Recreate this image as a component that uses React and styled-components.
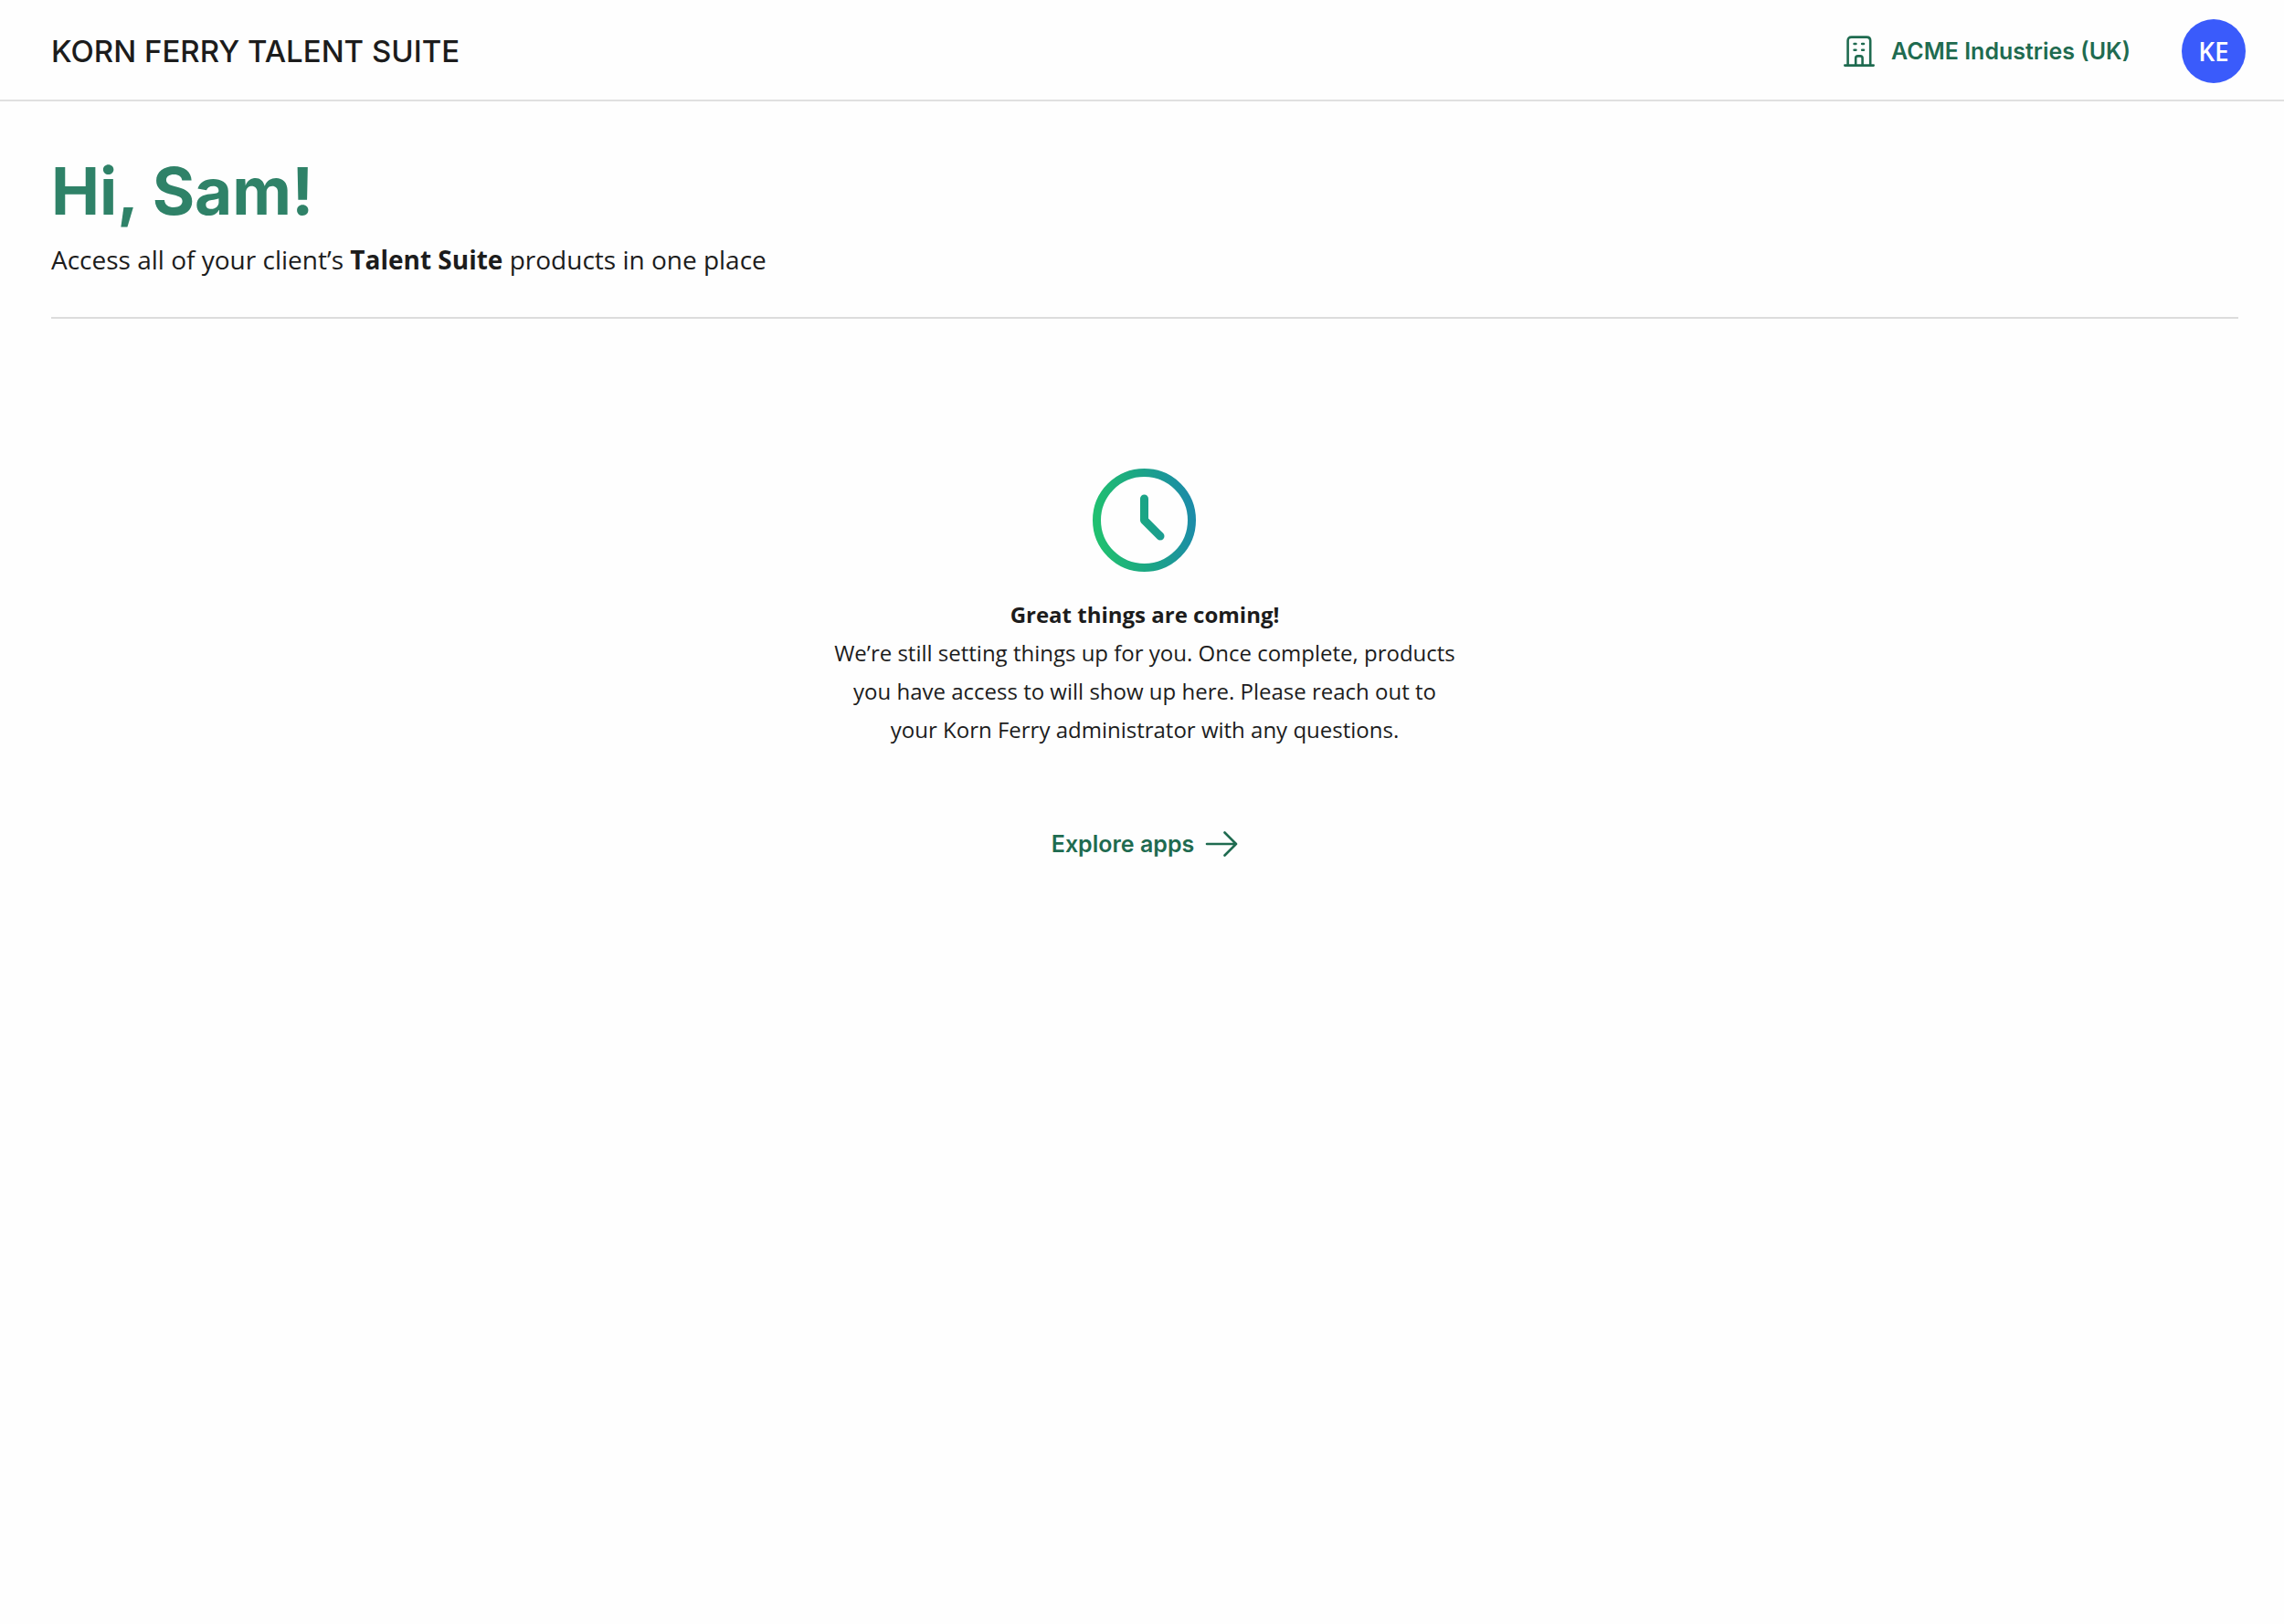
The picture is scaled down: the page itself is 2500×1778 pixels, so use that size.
import React from "react";
import styled, { createGlobalStyle } from "styled-components";

const GlobalStyle = createGlobalStyle`
  *, *::before, *::after { box-sizing: border-box; }
  body {
    margin: 0;
    background: #fefefe;
    color: #1c1c1c;
    font-family: "Open Sans", "Noto Sans", sans-serif;
  }
`;

const displayFont = `"Inter", "Liberation Sans", sans-serif`;
const green = "#1f6b50";

const Header = styled.header`
  display: flex;
  align-items: center;
  justify-content: space-between;
  padding: 21px 42px 18px 56px;
  border-bottom: 2px solid #e0e0e0;
`;

const Brand = styled.span`
  font: 500 33px/40px ${displayFont};
`;

const HeaderActions = styled.div`
  display: flex;
  align-items: center;
  gap: 56px;
`;

const CompanyButton = styled.button`
  display: flex;
  align-items: center;
  gap: 18px;
  padding: 0;
  border: 0;
  background: none;
  color: ${green};
  font: 600 25px/32px ${displayFont};
  cursor: pointer;
`;

const Avatar = styled.button`
  width: 70px;
  height: 70px;
  padding: 0;
  border: 0;
  border-radius: 50%;
  background: #3a5bfb;
  color: #fff;
  font: 600 28px/40px "Open Sans", "Noto Sans", sans-serif;
  cursor: pointer;
`;

const Main = styled.main`
  padding: 56px 50px 56px 56px;
`;

const Intro = styled.section`
  padding-bottom: 42px;
  border-bottom: 2px solid #dcdcdc;
`;

const Greeting = styled.h1`
  margin: 0 0 12px;
  color: #2f8268;
  font: 700 71px/84px ${displayFont};
`;

const Subtitle = styled.p`
  margin: 0;
  font-size: 28px;
  line-height: 42px;
`;

const EmptyState = styled.section`
  display: flex;
  flex-direction: column;
  align-items: center;
  padding-top: 164px;
  text-align: center;
`;

const EmptyTitle = styled.h2`
  margin: 25px 0 0;
  font-size: 24px;
  line-height: 42px;
  font-weight: 700;
`;

const EmptyText = styled.p`
  max-width: 688px;
  margin: 0;
  font-size: 24px;
  line-height: 42px;
`;

const ExploreLink = styled.a`
  display: flex;
  align-items: center;
  gap: 12px;
  margin-top: 88px;
  color: ${green};
  font: 600 25px/32px ${displayFont};
  text-decoration: none;
`;

function BuildingIcon() {
  return (
    <svg width="34" height="34" viewBox="0 0 34 34" fill="none" stroke="currentColor" strokeWidth="2.6" strokeLinecap="round" aria-hidden="true">
      <path d="M4.6 32.5V5.6Q4.6 1.6 8.6 1.6H25.2Q29.2 1.6 29.2 5.6V32.5" />
      <path d="M1.3 32.6H32.7" />
      <path d="M13.2 32.5V24.8Q13.2 22.4 15.6 22.4H18.2Q20.6 22.4 20.6 24.8V32.5" />
      <path d="M11.6 9H13.4M20.2 9H22M11.6 15.8H13.4M20.2 15.8H22" />
    </svg>
  );
}

function ClockIcon() {
  return (
    <svg width="114" height="114" viewBox="0 0 114 114" fill="none" stroke="url(#clock)" strokeWidth="9" strokeLinecap="round" strokeLinejoin="round" aria-hidden="true">
      <defs>
        <linearGradient id="clock" gradientUnits="userSpaceOnUse" x1="4" y1="64" x2="110" y2="50">
          <stop offset="0" stopColor="#20c070" />
          <stop offset="0.5" stopColor="#1ba585" />
          <stop offset="1" stopColor="#1c8ca8" />
        </linearGradient>
      </defs>
      <circle cx="56.5" cy="56.5" r="52" />
      <path d="M56.5 33V56.5L74 74" />
    </svg>
  );
}

function ArrowIcon() {
  return (
    <svg width="36" height="28" viewBox="0 0 36 28" fill="none" stroke="currentColor" strokeWidth="2.6" strokeLinecap="round" strokeLinejoin="round" aria-hidden="true">
      <path d="M2 14H34M21.5 1.5L34 14L21.5 26.5" />
    </svg>
  );
}

export default function App() {
  return (
    <>
      <GlobalStyle />
      <Header>
        <Brand>KORN FERRY TALENT SUITE</Brand>
        <HeaderActions>
          <CompanyButton type="button">
            <BuildingIcon />
            ACME Industries (UK)
          </CompanyButton>
          <Avatar type="button">KE</Avatar>
        </HeaderActions>
      </Header>
      <Main>
        <Intro>
          <Greeting>Hi, Sam!</Greeting>
          <Subtitle>
            Access all of your client’s <strong>Talent Suite</strong> products in one place
          </Subtitle>
        </Intro>
        <EmptyState>
          <ClockIcon />
          <EmptyTitle>Great things are coming!</EmptyTitle>
          <EmptyText>
            We’re still setting things up for you. Once complete, products you have access to will
            show up here. Please reach out to your Korn Ferry administrator with any questions.
          </EmptyText>
          <ExploreLink href="#apps">
            Explore apps
            <ArrowIcon />
          </ExploreLink>
        </EmptyState>
      </Main>
    </>
  );
}
